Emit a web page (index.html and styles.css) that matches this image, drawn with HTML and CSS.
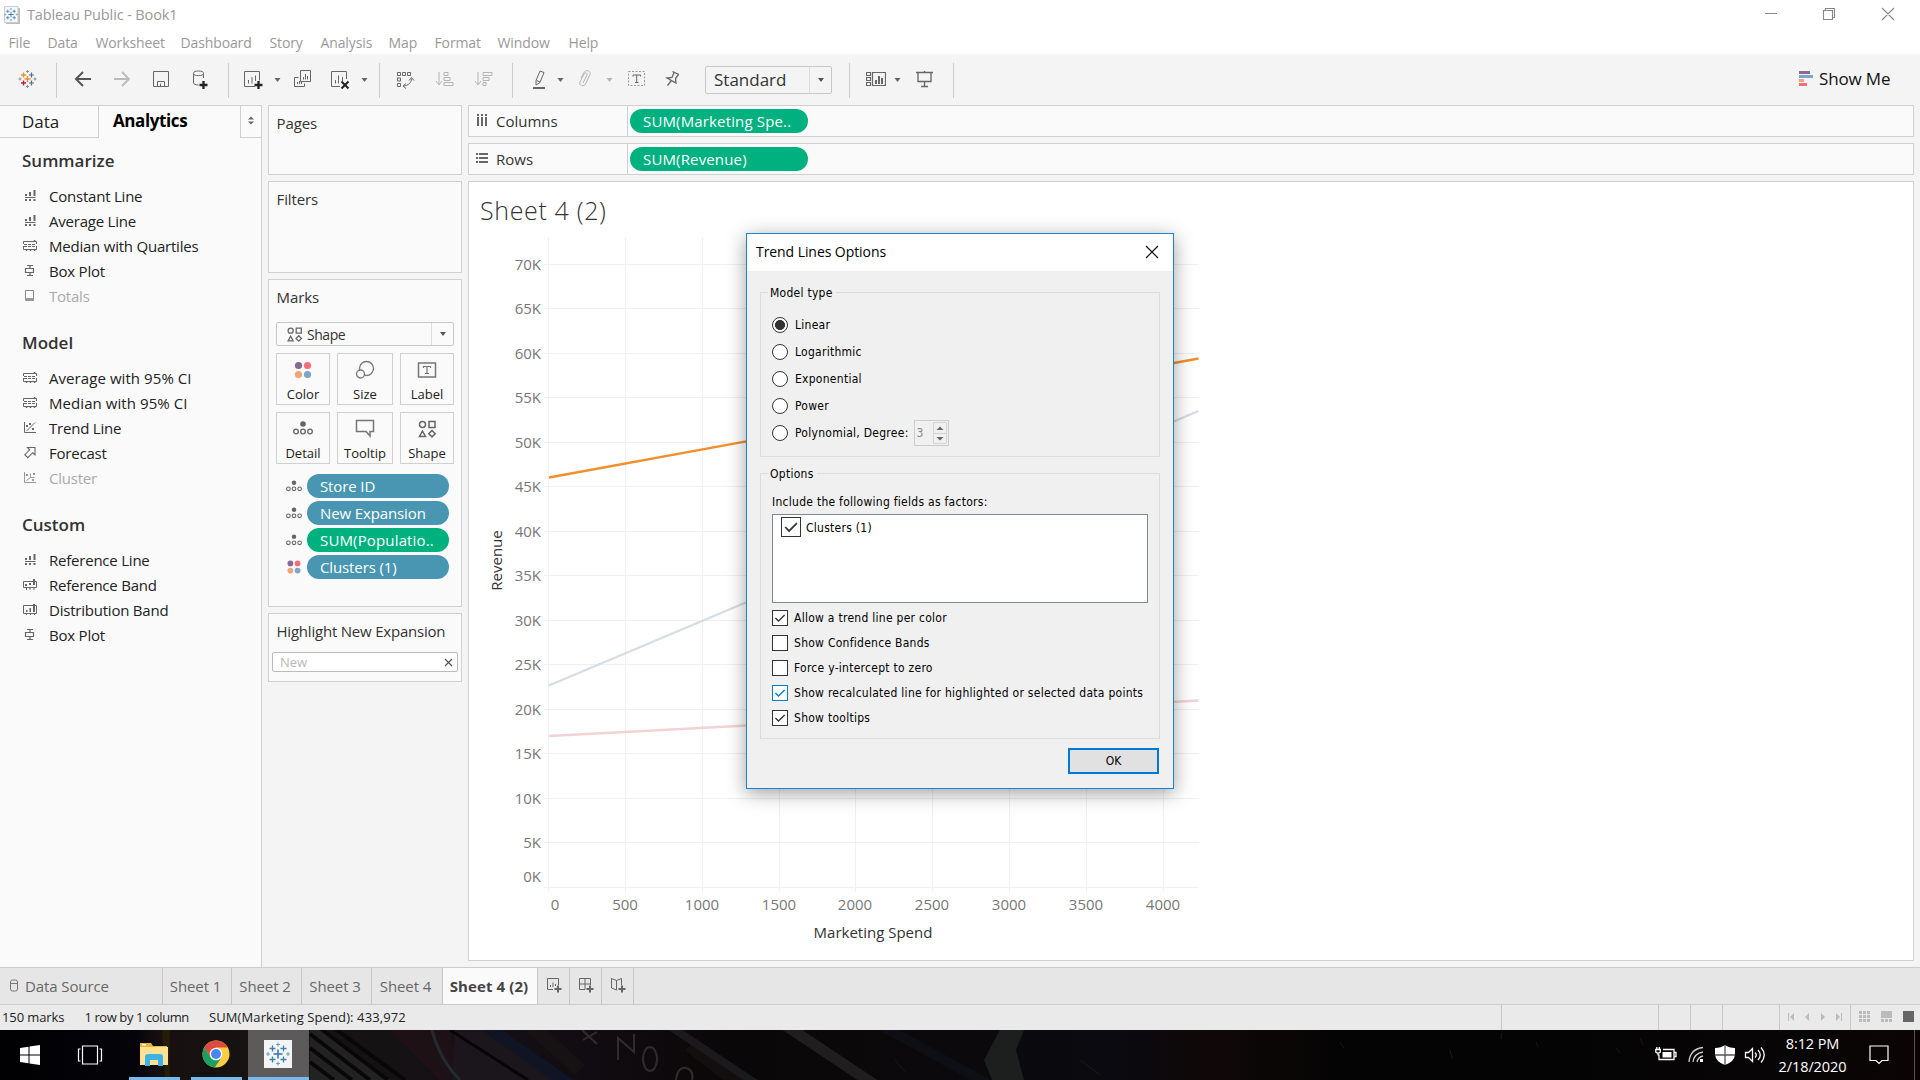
FILE: index.html
```html
<!DOCTYPE html>
<html lang="en">
<head>
<meta charset="utf-8">
<title>Tableau Public - Book1</title>
<link rel="stylesheet" href="styles.css">
</head>
<body>
<svg width="0" height="0" class="defs">
  <defs>
    <symbol id="i-line" viewBox="0 0 16 16"><path fill="#666" d="M3 6h2v2H3zM7 4h2v4H7zM11.500 2h2v6h-2zM3 9h10.500v1H3zM3 11h2v2H3zM7 11h2v2H7zM11.500 11h2v2h-2z"/></symbol>
    <symbol id="i-quart" viewBox="0 0 16 16"><path fill="none" stroke="#666" d="M1.500 6V3.500h13V6M1.500 8v3.500h13V8"/><path fill="none" stroke="#666" stroke-dasharray="3 1" d="M2 6.500h12M2 8.500h12"/><path stroke="#666" stroke-width="1.500" d="M12.500 2v2M4.500 11v2M8.500 11v2M12.500 11v2"/></symbol>
    <symbol id="i-box" viewBox="0 0 16 16"><path fill="none" stroke="#666" stroke-width="1.200" d="M5 2.500h6M8 2.500v3M3.500 5.500h8v4h-8zM8 9.500v3M5 12.500h6"/></symbol>
    <symbol id="i-total" viewBox="0 0 16 16"><path fill="none" stroke="#888" d="M3.500 2.500h8v10h-8z"/><path fill="#999" d="M3 10h9v3H3z"/></symbol>
    <symbol id="i-trend" viewBox="0 0 16 16"><path fill="none" stroke="#666" d="M2.500 2v10.500H14M4.500 11L13 2.500"/><path fill="#666" d="M4 5h2v2H4zM7 3h2v2H7zM10 8h2v2h-2z"/></symbol>
    <symbol id="i-fore" viewBox="0 0 16 16"><path fill="none" stroke="#666" stroke-width="1.100" d="M5.500 2.500h7.500v7.500l-2.300-2.300-4.900 5-3-3 4.900-4.900z"/></symbol>
    <symbol id="i-clus" viewBox="0 0 16 16"><path fill="none" stroke="#999" d="M2.500 2v10.500H14M4.500 10.500l4-3M8.500 7.500v-4M8.500 7.500h4"/><path fill="#999" d="M4 4h2v2H4zM11 3h2v2h-2zM10 9h2v2h-2z"/></symbol>
    <symbol id="i-band" viewBox="0 0 16 16"><path fill="none" stroke="#666" d="M1.500 4.500h13v6h-13z"/><path fill="#666" d="M3 7h2v2H3zM7 6h2v2H7zM11 2h2v6h-2zM4 10h1v3H4zM7.500 10h1v3h-1zM11.500 10h1v3h-1z"/></symbol>
    <symbol id="i-dist" viewBox="0 0 16 16"><path fill="none" stroke="#666" d="M1.500 3.500h13v8h-13z"/><path fill="#666" d="M4 8h1.500v2H4zM7.500 6h1.500v4H7.500zM11 2h2v8h-2zM4 12h1v1H4zM8 12h1v1H8zM12 12h1v1h-1z"/></symbol>
    <symbol id="i-detail" viewBox="0 0 20 16"><circle cx="10" cy="4" r="2.800" fill="#666"/><g fill="none" stroke="#666" stroke-width="1.300"><circle cx="3" cy="11.500" r="2.300"/><circle cx="10" cy="11.500" r="2.300"/><circle cx="17" cy="11.500" r="2.300"/></g></symbol>
    <symbol id="i-color" viewBox="0 0 20 20"><circle cx="5.500" cy="5.500" r="3.600" fill="#866a94"/><circle cx="14.500" cy="5.500" r="3.600" fill="#f96e7c"/><circle cx="5.500" cy="14.500" r="3.600" fill="#f2a477"/><circle cx="14.500" cy="14.500" r="3.600" fill="#7ea3cc"/></symbol>
    <symbol id="i-shape" viewBox="0 0 20 20"><g fill="none" stroke="#666" stroke-width="1.500"><circle cx="5.500" cy="5.500" r="3"/><path d="M12 2.500h6v6h-6zM5.500 12l3 5.500h-6zM15 11.500l3.200 3.200-3.200 3.200-3.200-3.200z"/></g></symbol>
    <symbol id="i-tableau" viewBox="0 0 24 24"><path stroke-width="1.500" stroke="#2e74ad" d="M12 7.500v9M7.500 12h9"/><path stroke-width="1.300" stroke="#3d7fae" d="M6.500 3.500v6M3.500 6.500h6M17.500 3.500v6M14.500 6.500h6M6.500 14.500v6M3.500 17.500h6M17.500 14.500v6M14.500 17.500h6"/><path stroke="#6e9cb8" d="M12 .5v4M10 2.500h4M12 19.500v4M10 21.500h4M2 10v4M0 12h4M22 10v4M20 12h4"/></symbol>
    <symbol id="i-check" viewBox="0 0 16 16"><path fill="none" stroke="currentColor" stroke-width="1.500" d="M2.800 8l3.500 3.500 7-7"/></symbol>
  </defs>
</svg>

<header class="titlebar">
  <svg class="app-icon" width="16" height="18"><path fill="#bbb" d="M2 2h14v16H2z"/><path fill="#f4f8fb" stroke="#ccc" d="M.5.5h13.500v16H.5z"/><use href="#i-tableau" x="0" y="1" width="14" height="15"/></svg>
  <span class="app-title">Tableau Public - Book1</span>
  <svg class="win-buttons" width="140" height="24" fill="none" stroke="#888" stroke-width="1.100"><path d="M5 13.500h12M63.500 10.500h9v9h-9zM65.500 10v-1.500h9v9H73M122 8l12 12M134 8l-12 12"/></svg>
</header>
<nav class="menubar">
  <span>File</span><span>Data</span><span>Worksheet</span><span>Dashboard</span><span>Story</span><span>Analysis</span><span>Map</span><span>Format</span><span>Window</span><span>Help</span>
</nav>

<div class="toolbar">
  <svg class="ic" viewBox="0 0 20 20"><path stroke="#eb912b" stroke-width="1.400" d="M10.500 7v6M7.500 10h6M6.500 3.500v5M4 6h5"/><path stroke="#5b6591" stroke-width="1.200" d="M14.500 3.500v5M12 6h5M14.500 11.500v5M12 14h5"/><path stroke="#c72035" stroke-width="1.400" d="M6.500 11.500v5M4 14h5"/><path stroke="#7099a6" d="M10.500 1v3M9 2.500h3M10.500 16v3M9 17.500h3M3 8.500v3M1.500 10h3M18 8.500v3M16.500 10h3"/></svg>
  <i class="sep"></i>
  <svg class="ic" viewBox="0 0 20 20"><path stroke="#555" stroke-width="2" d="M2.500 10H18M10 3l-7 7 7 7"/></svg>
  <svg class="ic" viewBox="0 0 20 20"><path stroke="#bbb" stroke-width="1.800" d="M2 10h15M10 3l7 7-7 7"/></svg>
  <svg class="ic" viewBox="0 0 20 20"><path d="M2.500 2.500h15v15h-15zM6.500 17.500v-5h7v5M9.500 14.500v3"/></svg>
  <svg class="ic" viewBox="0 0 20 20"><path d="M3.500 4.500v9.500c0 1 2 2 5 2M13.500 4.500V9"/><ellipse cx="8.500" cy="4.300" rx="5" ry="2.300"/><path stroke="#222" stroke-width="2.300" d="M13.500 12v8M9.500 16h8"/></svg>
  <i class="sep"></i>
  <svg class="ic" viewBox="0 0 20 20"><path d="M12 17.500H1.500v-15h15v9M5.500 11v3.500M9 8v6.500M12.500 6.500V12" /><path stroke="#222" stroke-width="2.300" d="M15.500 12v8M11.500 16h8"/></svg>
  <svg class="ic caret"><path d="M1.500 9h6l-3 4z"/></svg>
  <svg class="ic" viewBox="0 0 20 20"><path d="M7.500 1.500h10v11h-10zM10.500 8v2.500M12.500 5v5.500M14.500 7v3.500M5.500 8.500h-4v9h10v-3M4.500 13v2M6.500 12v3M8.500 13v2"/></svg>
  <svg class="ic" viewBox="0 0 20 20"><path d="M9 17.500H.5v-15h15V10M4.500 11v3.500M7.500 6.500v8M11.500 8v4"/><path stroke="#222" stroke-width="2" d="M10.500 12.500l7 7M17.500 12.500l-7 7"/></svg>
  <svg class="ic caret"><path d="M1.500 9h6l-3 4z"/></svg>
  <i class="sep"></i>
  <svg class="ic" viewBox="0 0 20 20"><path d="M2.500 3.500h3v3h-3zM7.500 3.500h3v3h-3zM12.500 3.500h3v3h-3zM2.500 9h3v3h-3zM2.500 14.500h3v3h-3zM16.500 9.500c0 4-3 7-8 7.500M14 11.500l2.500-3 2.500 3M11 14.500l-3 2.500 3 2.500"/></svg>
  <svg class="ic dim" viewBox="0 0 20 20"><path d="M4 3v12M1 12l3 4 3-4M9 3.500h4v3h-4zM9 8.500h6v3h-6zM9 13.500h9v3h-9z"/></svg>
  <svg class="ic dim" viewBox="0 0 20 20"><path d="M4 3v12M1 12l3 4 3-4M9 3.500h9v3h-9zM9 8.500h6v3h-6zM9 13.500h3v3h-3z"/></svg>
  <i class="sep"></i>
  <svg class="ic" viewBox="0 0 20 20"><path d="M11 2l4 1.500-4 10-4 2.500v-4.500zM7.500 11.500l3.500 1.500"/><path stroke-width="2" d="M4 19h12"/></svg>
  <svg class="ic caret"><path d="M1.500 9h6l-3 4z"/></svg>
  <svg class="ic dim" viewBox="0 0 20 20"><path d="M6 9l3-5.500c2-3.500 7.500-1.500 6 2l-4.500 9.500c-1.500 3-7 2-5.500-2l4-8c1-2 4-1 3 1l-4 8"/></svg>
  <svg class="ic caret dim"><path d="M1.500 9h6l-3 4z"/></svg>
  <svg class="ic" viewBox="0 0 20 20"><path stroke="#999" stroke-dasharray="2 1.500" d="M1.500 2.500h16v14h-16z"/><path d="M6 7.500v-1.500h7.500v1.500M9.700 6v7.500M8 13.500h3.500"/></svg>
  <svg class="ic" viewBox="0 0 20 20"><path stroke-width="1.300" d="M8.500 2.500l6.500 3M10 3.500l-2 5-5 .5 9 5-.5-4.500 3-4M7.500 11.500l-4 5"/></svg>
  <div class="select fit"><span>Standard</span><b></b></div>
  <i class="sep"></i>
  <svg class="ic" viewBox="0 0 20 20"><path stroke-width="1.200" d="M.5 3.500h4v3h-4zM.5 8.500h4v3h-4zM.5 13.500h4v3h-4zM6.500 3.500h13v13h-13z"/><path stroke-width="2" d="M10 11v4M13 7v8M16 9v6"/></svg>
  <svg class="ic caret"><path d="M1.500 9h6l-3 4z"/></svg>
  <svg class="ic" viewBox="0 0 20 20"><path stroke-width="1.300" d="M1 3.500h17M3 3.500v9h13v-9M9.500 12.500v5M6 17.500h7M9.500 2v2"/></svg>
  <i class="sep"></i>
  <div class="showme"><svg width="14" height="16"><path fill="#866a94" d="M0 0h11v3H0z"/><path fill="#7ea3cc" d="M0 4h14v3H0z"/><path fill="#f2a477" d="M0 8h5v3H0z"/><path fill="#f96e7c" d="M0 12h8v3H0z"/></svg><span>Show Me</span></div>
</div>

<main class="workspace">
  <aside class="side">
    <div class="side-tabs"><span class="t-data">Data</span><span class="t-analytics">Analytics</span><span class="t-more"><svg width="6" height="9"><path fill="#666" d="M0 3.500L3 .5l3 3zM0 5.500h6l-3 3z"/></svg></span></div>
    <h3>Summarize</h3>
    <ul>
      <li><svg><use href="#i-line"/></svg>Constant Line</li>
      <li><svg><use href="#i-line"/></svg>Average Line</li>
      <li><svg><use href="#i-quart"/></svg>Median with Quartiles</li>
      <li><svg><use href="#i-box"/></svg>Box Plot</li>
      <li class="off"><svg><use href="#i-total"/></svg>Totals</li>
    </ul>
    <h3>Model</h3>
    <ul>
      <li class="ci"><svg><use href="#i-quart"/></svg>Average with 95% CI</li>
      <li class="ci"><svg><use href="#i-quart"/></svg>Median with 95% CI</li>
      <li><svg><use href="#i-trend"/></svg>Trend Line</li>
      <li><svg><use href="#i-fore"/></svg>Forecast</li>
      <li class="off"><svg><use href="#i-clus"/></svg>Cluster</li>
    </ul>
    <h3>Custom</h3>
    <ul>
      <li><svg><use href="#i-line"/></svg>Reference Line</li>
      <li><svg><use href="#i-band"/></svg>Reference Band</li>
      <li><svg><use href="#i-dist"/></svg>Distribution Band</li>
      <li><svg><use href="#i-box"/></svg>Box Plot</li>
    </ul>
  </aside>

  <section class="cards">
    <div class="card pages"><h4>Pages</h4></div>
    <div class="card filters"><h4>Filters</h4></div>
    <div class="card marks">
      <h4>Marks</h4>
      <div class="select mark-type"><svg width="17" height="17"><use href="#i-shape"/></svg><span>Shape</span><b></b></div>
      <div class="mark-grid">
        <div><svg width="20" height="20"><use href="#i-color"/></svg>Color</div>
        <div><svg width="20" height="20" fill="#fafafa" stroke="#777" stroke-width="1.300"><circle cx="11.500" cy="8.500" r="7"/><circle cx="5.500" cy="14" r="4"/></svg>Size</div>
        <div><svg width="20" height="20" fill="none" stroke="#777" stroke-width="1.500"><path d="M1.500 3h17v14h-17z"/><path stroke-width="1.200" d="M6.500 8V6.500h7V8M10 6.500v7M8 13.500h4"/></svg>Label</div>
        <div><svg width="20" height="20"><use href="#i-detail" y="1" height="16"/></svg>Detail</div>
        <div><svg width="20" height="20" fill="none" stroke="#777" stroke-width="1.500"><path d="M1.500 1.500h17v11H15v4.500l-4-4.500H1.500z"/></svg>Tooltip</div>
        <div><svg width="20" height="20"><use href="#i-shape"/></svg>Shape</div>
      </div>
      <div class="mark-row"><svg><use href="#i-detail"/></svg><span class="pill blue">Store ID</span></div>
      <div class="mark-row"><svg><use href="#i-detail"/></svg><span class="pill blue">New Expansion</span></div>
      <div class="mark-row"><svg><use href="#i-detail"/></svg><span class="pill green">SUM(Populatio..</span></div>
      <div class="mark-row"><svg><use href="#i-color"/></svg><span class="pill blue">Clusters (1)</span></div>
    </div>
    <div class="card highlight"><h4>Highlight New Expansion</h4>
      <div class="search"><span>New</span><svg width="9" height="9" stroke="#555" stroke-width="1.200"><path d="M1 1l7 7M8 1L1 8"/></svg></div>
    </div>
  </section>

  <section class="view">
    <div class="shelf"><div class="shelf-name"><svg width="14" height="14"><path fill="#666" d="M1 0h2v2H1zM5 0h2v2H5zM9 0h2v2H9zM1 3h2v9H1zM5 3h2v9H5zM9 3h2v9H9z"/></svg>Columns</div><span class="pill green">SUM(Marketing Spe..</span></div>
    <div class="shelf"><div class="shelf-name"><svg width="14" height="14"><path fill="#666" d="M0 1h2v2H0zM0 5h2v2H0zM0 9h2v2H0zM3 1h9v2H3zM3 5h9v2H3zM3 9h9v2H3z"/></svg>Rows</div><span class="pill green">SUM(Revenue)</span></div>
    <div class="sheet">
      <h1>Sheet 4 (2)</h1>
      <svg class="chart" width="740" height="720" viewBox="469 235 740 720">
        <g stroke="#f0f0f0" shape-rendering="crispEdges">
          <path d="M544 264.500h655M544 308.500h655M544 353.500h655M544 397.500h655M544 442.500h655M544 486.500h655M544 531.500h655M544 575.500h655M544 620.500h655M544 664.500h655M544 709.500h655M544 753.500h655M544 798.500h655M544 842.500h655M544 887.500h655"/>
          <path d="M548.500 237v655M625.500 237v655M702.500 237v655M779.500 237v655M855.500 237v655M932.500 237v655M1009.500 237v655M1086.500 237v655M1163.500 237v655"/>
        </g>
        <g fill="none" stroke-width="2.400">
          <path stroke="#f28e2b" d="M549 477.500L1198.500 358.500"/>
          <path stroke="#d5dde5" d="M549 685.500L747 602L1198.500 411"/>
          <path stroke="#f1d3d5" d="M549 736L747 725.500L1198.500 700.500"/>
        </g>
        <g class="tick" text-anchor="end">
          <text x="541" y="270">70K</text><text x="541" y="314">65K</text><text x="541" y="359">60K</text><text x="541" y="403">55K</text><text x="541" y="448">50K</text><text x="541" y="492">45K</text><text x="541" y="537">40K</text><text x="541" y="581">35K</text><text x="541" y="626">30K</text><text x="541" y="670">25K</text><text x="541" y="715">20K</text><text x="541" y="759">15K</text><text x="541" y="804">10K</text><text x="541" y="848">5K</text><text x="541" y="882">0K</text>
        </g>
        <g class="tick" text-anchor="middle">
          <text x="555" y="910">0</text><text x="625" y="910">500</text><text x="702" y="910">1000</text><text x="779" y="910">1500</text><text x="855" y="910">2000</text><text x="932" y="910">2500</text><text x="1009" y="910">3000</text><text x="1086" y="910">3500</text><text x="1163" y="910">4000</text>
        </g>
        <text class="axis" text-anchor="middle" x="873" y="938">Marketing Spend</text>
        <text class="axis" text-anchor="middle" transform="translate(502 560.500) rotate(-90)">Revenue</text>
      </svg>
    </div>
  </section>
</main>

<div class="sheet-tabs">
  <span class="tab source"><svg width="9" height="15" fill="none" stroke="#777"><rect x=".5" y="1" width="7" height="11" rx="2"/><path d="M1 4.500h6.500"/></svg>Data Source</span>
  <span class="tab">Sheet 1</span><span class="tab">Sheet 2</span><span class="tab">Sheet 3</span><span class="tab">Sheet 4</span><span class="tab active">Sheet 4 (2)</span>
  <span class="tab"><svg width="18" height="18" fill="none" stroke="#666"><path d="M8 12.500H2.500v-11h11V8M5.500 8v2M8 5.500V10M10.500 7v2"/><path stroke-width="2" d="M13 8.500v7M9.500 12h7"/></svg></span>
  <span class="tab"><svg width="18" height="18" fill="none" stroke="#666"><path d="M8 12.500H2.500v-11h11V8M2.500 7h11M8 1.500v11"/><path stroke-width="2" d="M13 8.500v7M9.500 12h7"/></svg></span>
  <span class="tab"><svg width="18" height="18" fill="none" stroke="#666"><path d="M2.500 1.500l5 2 5-2V8M2.500 1.500V11l5 2V3.500"/><path stroke-width="2" d="M13 8.500v7M9.500 12h7"/></svg></span>
</div>

<div class="status">
  <div class="status-text"><span>150 marks</span><span class="tight">1 row by 1 column</span><span>SUM(Marketing Spend): 433,972</span></div>
  <i></i><i></i><i></i><i></i>
  <i><svg width="71" height="25" fill="#bbb"><path d="M8 8h1v8H8zM14 8v8l-4-4zM29 8v8l-4-4zM41 8v8l4-4zM56 8v8l4-4zM61 8h1v8h-1z"/></svg></i>
  <i><svg width="69" height="25" fill="#bbb"><path d="M8 6h3v3H8zM12 6h3v3h-3zM16 6h3v3h-3zM8 10h3v3H8zM12 10h3v3h-3zM16 10h3v3h-3zM8 14h3v3H8zM12 14h3v3h-3zM16 14h3v3h-3zM30 6h11v7H30zM30 14h3v3h-3zM34 14h3v3h-3zM38 14h3v3h-3z"/><path fill="#666" d="M52 6h11v11H52z"/></svg></i>
</div>

<footer class="taskbar">
  <svg class="wall" width="1920" height="50" preserveAspectRatio="none">
    <defs>
      <linearGradient id="w"><stop offset="0" stop-color="#010102"/><stop offset=".07" stop-color="#04040a"/><stop offset=".083" stop-color="#160f10"/><stop offset=".13" stop-color="#171313"/><stop offset=".2" stop-color="#151214"/><stop offset=".27" stop-color="#130f15"/><stop offset=".38" stop-color="#0a0708"/><stop offset=".5" stop-color="#0b090b"/><stop offset=".58" stop-color="#0a0a10"/><stop offset=".63" stop-color="#100808"/><stop offset=".7" stop-color="#040404"/><stop offset=".93" stop-color="#070505"/><stop offset="1" stop-color="#0c0404"/></linearGradient>
    </defs>
    <path fill="url(#w)" d="M0 0h1920v50H0z"/>
    <path fill="#251c05" d="M162 0h8v50h-5z"/>
    <path fill="#222" d="M310 0h16l65 50h-81z"/>
    <path stroke="#080808" stroke-width="4" d="M310 4l60 46M310 18l42 32M310 32l24 18M316-5l72 55M330-5l75 55"/>
    <path fill="#1d1116" d="M390 0h60l10 50-20 0z"/>
    <path fill="#1b151c" d="M455 0h30l75 50H452z"/>
    <path stroke="#222b2d" stroke-width="3" fill="none" d="M432 0q8 30 28 50"/>
    <path stroke="#080506" stroke-width="3" d="M450 0l78 50"/>
    <path stroke="#101424" stroke-width="12" d="M485-5l85 60"/>
    <path stroke="#1a1413" stroke-width="14" opacity=".6" d="M530-5l50 45M690 15l50 40"/>
    <path stroke="#1a191b" stroke-width="8" d="M668-5l90 60"/>
    <path stroke="#1f1e1e" stroke-width="11" d="M785-5l90 60"/>
    <path stroke="#0e0e15" stroke-width="10" d="M880-5l110 60"/>
    <path fill="#1d1f1f" d="M1000 0h24l-8 20 8 30h-32l-8-20z"/>
    <g stroke="#2e2d2c" stroke-width="2" fill="none"><path d="M582 0l15 14M597 2l-14 8M618 30V8l16 14V4M676 50q2-14 10-12t6 12"/><ellipse cx="650" cy="29" rx="7" ry="12"/></g>
    <path stroke="#191717" d="M1340 12l4 6M1450 20l2 8M1502 3l-1 6M1536 12l2 5M1616 18l4 5M1640 8l3 7M1765 10l-2 6M895 30l10 12M1080 30l20 15"/>
  </svg>
  <div class="task"><svg width="20" height="20" fill="#fff"><path d="M0 3l8.500-1.300v7.800H0zM9.500 1.500L20 0v9.500H9.500zM0 10.500h8.500v7.800L0 17zM9.500 10.500H20V20L9.500 18.500z"/></svg></div>
  <div class="task"><svg width="26" height="20" fill="none" stroke="#fff" stroke-width="1.200"><path d="M5.500 1h15v18h-15zM3.500 4H1.500v12h2M22.500 4h2v12h-2"/></svg></div>
  <div class="task open"><svg width="28" height="24"><path fill="#e8b43c" d="M0 1h11l2 3h14v5H0z"/><path fill="#fde293" d="M0 5h28v18H0z"/><path fill="#fff" d="M2 2h4v1.500H2z"/><path fill="#3fb2e8" d="M5 24v-9q0-3 3-3h12q3 0 3 3v9h-5v-6h-8v6z"/></svg></div>
  <div class="task open"><svg width="28" height="28" viewBox="0 0 28 28"><circle cx="14" cy="14" r="13.500" fill="#ffcd40"/><path fill="#dd4b3e" d="M2.300 7.200A13.500 13.500 0 0 1 25.800 7.500H14L8.200 17.300z"/><path fill="#1aa15f" d="M2.300 7.200L8.500 17.500 14 20.300 19 18.500 12.700 27.500A13.500 13.500 0 0 1 2.300 7.200z"/><circle cx="14" cy="14" r="6.300" fill="#fff"/><circle cx="14" cy="14" r="5" fill="#4687f4"/></svg></div>
  <div class="task open current"><svg width="28" height="28"><path fill="#f3f4f5" d="M0 0h28v28H0z"/><use href="#i-tableau" x="2" y="2" width="24" height="24"/></svg></div>
  <div class="tray">
    <svg width="110" height="24" fill="none" stroke="#fff" stroke-width="1.300"><path d="M8 6.500h11v10H4v-5M19.500 9.500h1.500v4h-1.500M.8 6.500h4.500v2.500q-2.200 2.500-4.500 0zM1.800 4v2M4.300 4v2M3 10.500v2"/><path fill="#fff" stroke="none" d="M7.500 9h9v5.500h-9z"/><path stroke="#ccc" d="M34 19Q35 6 48 4.500M38 19Q39 10.500 48 9M42 19Q43 14 48 13"/><path fill="#fff" stroke="none" d="M45 16h3v3h-3zM60 5q6 0 10-3 4 3 10 3v7q-1 7-10 10-9-3-10-10z"/><path stroke="#555" d="M70 2v20M60 12h20"/><path d="M90.500 9.500h3l4-4v13l-4-4h-3zM100 9.500q2.500 2.500 0 5M103 7q4.500 5 0 10M106 4.500q6.500 7.500 0 15" /></svg>
    <div class="clock"><span>8:12 PM</span><span>2/18/2020</span></div>
    <svg class="note" width="20" height="20" fill="none" stroke="#fff" stroke-width="1.200"><path d="M1 1h18v14.500h-6L10 18.500 7 15.500H1z"/></svg>
    <i></i>
  </div>
</footer>

<div class="dialog">
  <div class="dlg-title"><span>Trend Lines Options</span><svg width="14" height="14" stroke="#111" stroke-width="1.200"><path d="M1 1l12 12M13 1L1 13"/></svg></div>
  <div class="group model">
    <span class="legend">Model type</span>
    <label><i class="radio on"></i>Linear</label>
    <label><i class="radio"></i>Logarithmic</label>
    <label><i class="radio"></i>Exponential</label>
    <label><i class="radio"></i>Power</label>
    <label><i class="radio"></i>Polynomial, Degree:<span class="spin">3<svg width="14" height="22" fill="#666"><path fill="none" stroke="#d4d4d4" d="M.5.5h13v21H.5zM.5 11.500h13"/><path d="M3.500 8h7L7 4.500zM3.500 15h7L7 18.500z"/></svg></span></label>
  </div>
  <div class="group options">
    <span class="legend">Options</span>
    <p>Include the following fields as factors:</p>
    <div class="list"><i class="box big"><svg><use href="#i-check"/></svg></i>Clusters (1)</div>
    <label><i class="box"><svg><use href="#i-check"/></svg></i>Allow a trend line per color</label>
    <label><i class="box"></i>Show Confidence Bands</label>
    <label><i class="box"></i>Force y-intercept to zero</label>
    <label><i class="box hot"><svg><use href="#i-check"/></svg></i>Show recalculated line for highlighted or selected data points</label>
    <label><i class="box"><svg><use href="#i-check"/></svg></i>Show tooltips</label>
  </div>
  <button>OK</button>
</div>
</body>
</html>
```
FILE: styles.css
```css
* { box-sizing: border-box; }
body { margin: 0; width: 1920px; height: 1080px; overflow: hidden; background: #f4f4f4; font-family: "Open Sans", sans-serif; font-size: 15px; color: #333; display: flex; flex-direction: column; white-space: nowrap; position: relative; }
h1, h3, h4, ul, p { margin: 0; padding: 0; font-weight: 400; }
i { font-style: normal; }
svg { display: block; flex: none; }
.defs { position: absolute; }

.titlebar { height: 30px; background: #fff; display: flex; align-items: flex-start; padding: 6px 20px 0 4px; color: #999; }
.app-title { margin: -1px 0 0 7px; line-height: 20px; font-size: 14.5px; letter-spacing: -.12px; }
.win-buttons { margin: -6px 0 0 auto; }
.menubar { height: 24px; background: #fff; display: grid; grid-template-columns: 39px 48px 85px 89px 51px 68px 46px 63px 71px 1fr; padding-left: 8.500px; color: #999; font-size: 14px; letter-spacing: -.12px; line-height: 25px; }

.toolbar { height: 51px; padding: 15px 0 0 17px; display: grid; grid-template-columns: 39px 17px 39px 39px 39px 38px 15px 30px 20px 38px 29px 19px 16px 40px 39px 38px 17px 27px 19px 30px 22px 37px 41px 144px 17px 27px 22px 38px 846px 1fr; align-items: start; }
.ic { width: 20px; height: 20px; fill: none; stroke: #666; }
.ic.dim { stroke: #b4b4b4; }
.caret { width: 8px; fill: #666; stroke: none; }
.ic.caret { fill: #666; stroke: none; }
.ic.caret.dim { fill: #b4b4b4; }
.toolbar .sep { width: 1px; height: 35px; margin-top: -6px; background: #ccc; }
.select { border: 1px solid #c8c8c8; border-radius: 2px; display: flex; align-items: center; }
.select b { margin-left: auto; align-self: stretch; width: 22px; border-left: 1px solid #ddd; display: flex; align-items: center; justify-content: center; }
.select b::after { content: ""; border: 3.5px solid transparent; border-top: 4px solid #555; border-bottom: 0; }
.fit { width: 127px; height: 28px; margin-top: -3px; padding-left: 8px; font-size: 17px; }
.fit span { padding-bottom: 2px; }
.showme { display: flex; align-items: center; gap: 6px; height: 20px; font-size: 17px; letter-spacing: -.15px; color: #111; }
.showme span { padding-bottom: 2px; }

.workspace { height: 863px; display: flex; border-bottom: 1px solid #ccc; }
.side { width: 262px; background: #fafafa; border: 1px solid #d0d0d0; border-left: 0; border-bottom: 0; }
.side-tabs { display: flex; height: 32px; font-size: 17px; line-height: 31px; }
.t-data { width: 99px; padding-left: 22px; border-right: 1px solid #d0d0d0; border-bottom: 1px solid #d0d0d0; color: #222; }
.t-analytics { flex: 1; padding-left: 14px; font-weight: 700; letter-spacing: -.4px; color: #000; line-height: 30px; }
.t-more { width: 21px; border-left: 1px solid #d0d0d0; border-bottom: 1px solid #d0d0d0; display: flex; justify-content: center; padding-top: 10px; }
.side h3 { font-size: 17px; font-weight: 600; line-height: 24px; margin: 11px 0 0 22px; }
.side ul { list-style: none; padding: 11px 0 11px 22px; }
.side li { height: 25px; line-height: 25px; display: flex; gap: 11px; color: #222; letter-spacing: -.22px; }
.side li.ci { letter-spacing: .07px; }
.side li svg { width: 16px; height: 16px; margin-top: 4px; }
.side li.off { color: #aaa; }

.cards { width: 206px; padding-left: 6px; display: flex; flex-direction: column; gap: 6px; }
.card { width: 194px; background: #fafafa; border: 1px solid #d0d0d0; }
.card h4 { font-size: 15px; line-height: 20px; padding: 7px 0 0 7.500px; letter-spacing: -.1px; }
.pages { height: 70px; }
.filters { height: 92px; }
.marks { height: 328px; }
.highlight { height: 69px; }
.highlight h4 { letter-spacing: -.21px; }
.mark-type { width: 178px; height: 24px; margin: 15px 0 0 7px; padding-left: 9px; font-size: 14px; letter-spacing: -.45px; gap: 4px; }
.mark-grid { display: grid; grid-template-columns: 54px 56px 54px; gap: 7px; margin: 7px 0 0 7px; grid-auto-rows: 52px; }
.mark-grid div { border: 1px solid #d0d0d0; display: flex; flex-direction: column; align-items: center; font-size: 13px; line-height: 16px; gap: 6px; padding-top: 6px; color: #222; }
.mark-row { display: flex; height: 24px; margin: 0 0 3px 17px; align-items: center; gap: 5px; }
.mark-grid + .mark-row { margin-top: 10px; }
.mark-row svg { width: 16px; height: 16px; }
.pill { height: 24px; border-radius: 12px; padding-left: 13px; color: #fff; font-weight: 500; font-size: 15px; line-height: 24px; display: block; letter-spacing: .15px; }
.mark-row .pill { width: 142px; letter-spacing: -.12px; }
.mark-row .green { letter-spacing: .15px; }
.blue { background: #4996b2; }
.green { background: #00b180; }
.search { width: 186px; height: 20px; margin: 11px 0 0 3px; border: 1px solid #bbb; border-radius: 2px; background: #fff; display: flex; align-items: center; justify-content: space-between; padding: 0 4px 0 7px; color: #b8b8b8; font-size: 13px; }

.view { width: 1446px; display: flex; flex-direction: column; gap: 6px; }
.shelf { height: 32px; border: 1px solid #d0d0d0; background: #fafafa; display: flex; align-items: center; }
.shelf-name { width: 159px; align-self: stretch; border-right: 1px solid #d0d0d0; display: flex; align-items: center; padding-left: 7px; gap: 6px; }
.shelf .pill { width: 178px; margin-left: 2px; }
.sheet { height: 780px; border: 1px solid #d0d0d0; background: #fff; }
.sheet h1 { font-size: 25px; font-weight: 300; letter-spacing: .65px; line-height: 34px; padding: 11px 0 8px 11px; }
.tick { font-size: 15px; fill: #777; }
.axis { font-size: 15px; font-weight: 500; fill: #333; }

.sheet-tabs { height: 37px; background: #e6e6e6; border-bottom: 1px solid #ccc; display: grid; grid-template-columns: 163px 69px 70px 70px 71px 95px 32px 32px 32px; }
.tab { border-right: 1px solid #c6c6c6; display: flex; align-items: center; justify-content: center; color: #666; letter-spacing: -.1px; padding-right: 3px; }
.tab:has(svg) { padding-right: 0; }
.source { justify-content: flex-start; padding-left: 10px; gap: 6px; }
.active { background: #fafafa; color: #444; font-weight: 700; letter-spacing: .1px; padding: 0 2px 1px 0; }
.status { height: 25px; background: #eaeaea; display: grid; grid-template-columns: 1501px 157px 32px 32px 57px 71px 70px; font-size: 13px; line-height: 24px; color: #222; }
.status i { border-left: 1px solid #c8c8c8; }
.status-text { display: flex; padding-left: 2px; gap: 20px; letter-spacing: .11px; }
.status-text span:first-child { letter-spacing: -.1px; }
.status-text .tight { letter-spacing: -.4px; }

.taskbar { height: 50px; background: #050505; display: flex; position: relative; }
.wall { position: absolute; inset: 0; }
.task { position: relative; width: 60px; height: 50px; display: flex; align-items: center; justify-content: center; }
.task:nth-of-type(2) { margin-right: 4px; }
.task.open { border-bottom: 3px solid #76b9ed; width: 51px; margin: 0 6px 0 5px; padding: 1px 2px 0 0; }
.task.current { width: 61px; margin: 0; background: rgba(255, 255, 255, .3); }
.tray { position: relative; margin-left: auto; width: 265px; display: flex; align-items: center; color: #fff; }
.clock { width: 92px; margin-left: 1px; padding-left: 1px; display: flex; flex-direction: column; align-items: center; font-size: 14.5px; line-height: 23px; letter-spacing: -.1px; }
.note { margin-left: 11px; }
.tray i { margin-left: auto; margin-right: 5px; height: 50px; width: 1px; background: #555; }

.dialog { position: absolute; left: 746px; top: 233px; width: 428px; height: 556px; background: #f0f0f0; border: 1px solid #1883d7; box-shadow: 0 4px 18px rgba(0, 0, 0, .38); font: 12px/16px "DejaVu Sans Condensed", "DejaVu Sans", sans-serif; font-stretch: condensed; letter-spacing: .27px; color: #000; }
.dlg-title { height: 37px; background: #fff; display: flex; justify-content: space-between; align-items: center; padding: 0 14px 0 9px; font: 14px/20px "Open Sans", sans-serif; letter-spacing: -.07px; }
.dlg-title span { padding-bottom: 1px; }
.dlg-title svg { margin-bottom: 1px; }
.group { border: 1px solid #dcdcdc; width: 400px; margin-left: 13px; padding-left: 11px; }
.legend { display: block; width: max-content; margin: -8px 0 0 -4px; padding: 0 3px 0 2px; background: #f0f0f0; }
.model { margin-top: 21px; height: 165px; }
.model .legend { margin-bottom: 11px; }
.model label { display: flex; align-items: center; height: 27px; gap: 7px; padding-bottom: 1px; }
.radio { width: 16px; height: 16px; border: 1px solid #333; border-radius: 50%; background: #fff; }
.radio.on { background: radial-gradient(circle, #333 4.700px, #fff 5.300px); }
.spin { width: 35px; height: 26px; margin-left: -2px; border: 1px solid #ccc; display: flex; align-items: center; justify-content: space-between; padding: 0 1px 0 2px; color: #888; }
.options { margin-top: 16px; height: 266px; }
.options p { margin: 12px 0 4px; }
.list { width: 376px; height: 89px; border: 1px solid #828790; background: #fff; display: flex; gap: 5px; padding: 2px 0 0 8px; line-height: 22px; margin-bottom: 3px; }
.options label { display: flex; align-items: center; height: 25px; gap: 6px; padding-bottom: 1px; }
.box { width: 16px; height: 16px; border: 1px solid #333; background: #fff; color: #333; }
.box svg { width: 14px; height: 14px; }
.big { width: 20px; height: 20px; }
.big svg { width: 18px; height: 18px; }
.hot { border-color: #0078d7; color: #0078d7; }
.dialog button { display: block; margin: 9px 0 0 321px; width: 91px; height: 26px; border: 2px solid #0078d7; background: #e1e1e1; font: inherit; padding: 0; color: #000; }
```
